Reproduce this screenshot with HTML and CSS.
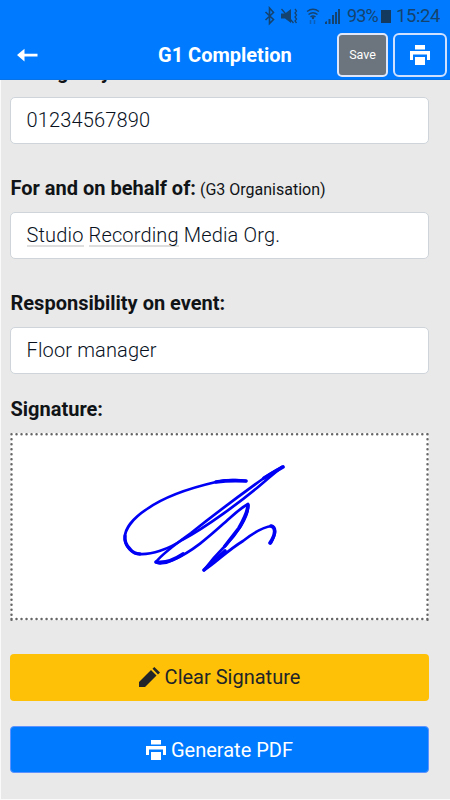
FILE: index.html
```html
<!DOCTYPE html>
<html lang="en">
<head>
<meta charset="utf-8">
<title>G1 Completion</title>
<link rel="stylesheet" href="styles.css">
</head>
<body>
<div class="screen">
<header class="header">
  <div class="status">
    <svg class="status-icons" width="78" height="20" viewBox="0 0 78 20">
      <g fill="none" stroke="#15436f" stroke-width="1.6">
        <path d="M1.500 6l8 7.500-4 4V2l4 4.500-8 7.500"/>
        <path d="M17.500 3l12 14M31 3l1.500 2-1.500 2 1.500 2-1.500 2 1.500 2-1.500 2 1.500 2" stroke-width="1.300"/>
        <path d="M43 5.500q6-4.500 12 0M44.500 8.500q4.500-3.500 9 0M46.500 11q2.500-2 5 0" stroke-width="1.500"/>
        <path d="M46.500 14v4M50.500 14v4" stroke-width="1.500" opacity=".5"/>
      </g>
      <g fill="#15436f"><path d="M17 7.500h4l6-4.500v14l-6-4.500h-4z"/><circle cx="49" cy="12" r="1.200"/><path d="M61 18v-2l2-1v3zM64.500 18v-5h2v5zM68 18V9h2v9zM71 18V6h2v12zM74 18V3h2v15z"/></g>
    </svg>
    <span class="percent">93%</span>
    <span class="battery"></span>
    <span class="clock">15:24</span>
  </div>
  <div class="bar">
    <svg class="back" width="22" height="14" viewBox="0 0 22 14"><path d="M0 7l7.500-6.300v5h13v2.700h-13v5z" fill="#fff"/></svg>
    <h1 class="title">G1 Completion</h1>
    <button class="save">Save</button>
    <button class="print"><svg width="20" height="20" viewBox="0 0 20 20" fill="#fff"><path d="M5 0h10v4.500H5zM0 6h20v9h-3V9.500H3V15H0zM5 12h10v8H5z"/></svg></button>
  </div>
</header>
<main class="form">
  <div class="field">
    <label class="label"><span>Emergency:</span></label>
    <div class="input">01234567890</div>
  </div>
  <div class="field">
    <label class="label"><span>For and on behalf of:</span> <small>(G3 Organisation)</small></label>
    <div class="input"><span class="word">Studio</span> <span class="word">Recording</span> Media Org.</div>
  </div>
  <div class="field">
    <label class="label"><span>Responsibility on event:</span></label>
    <div class="input">Floor manager</div>
  </div>
  <div class="sign">
    <label class="label"><span>Signature:</span></label>
    <svg class="pad" width="419" height="188" viewBox="10 433 419 188">
      <rect x="10.500" y="433" width="418" height="187" fill="#fff"/>
      <path d="M11.500 434.300H429M11.500 619H429M11.500 434.300V620M427.500 434.300V620" fill="none" stroke="#666" stroke-width="2.500" stroke-linecap="round" stroke-dasharray="0.010 5"/>
      <g fill="none" stroke="#0000f5" stroke-linecap="round" stroke-linejoin="round" stroke-width="2.700">
        <path d="M246 481C237 480 224 480 216 482C190 488 164 497 147 509C132 519 124 530 125 539C125 546 132 554 139 554C151 555 169 549 182 540C205 528 242 501 264 482Q271 476 282 467"/>
        <path d="M282 467Q271 473 264 478C239 496 211 517 191 533C177 543 162 554 156 562C157 564 165 564 173 560C196 550 215 531 231 517Q241 508 248 504C250 516 235 536 225 546Q214 557 204 570C215 564 225 552 243 541C253 533 264 527 272 526C277 530 275 535 271 543"/>
        <path d="M216 482Q230 480 246 481M264 478L283 467M248 505Q248 512 239 528L225 546M270 543C276 534 276 527 271 526M204 570L225 551M156 562Q168 564 183 554" stroke-width="3.600"/>
        <path d="M125 536Q124 543 130 549Q134 554 140 554" stroke-width="3.300"/>
      </g>
    </svg>
  </div>
  <button class="action clear"><svg width="21" height="21" viewBox="0 0 21 21" fill="#212529"><path d="M0 15L12 3l5.500 5.500L6 20H0zM13.500 1.800L15.300 0 21 5.500l-2 2z"/></svg><span>Clear Signature</span></button>
  <button class="action pdf"><svg width="20" height="20" viewBox="0 0 20 20" fill="#fff"><path d="M5 0h10v4.500H5zM0 6h20v9h-3V9.500H3V15H0zM5 12h10v8H5z"/></svg><span>Generate PDF</span></button>
</main>
</div>
</body>
</html>
```
FILE: styles.css
```css
* { box-sizing: border-box; }
body { margin: 0; background: #fafafa; font-family: Roboto, sans-serif; color: #111417; }
button { font-family: inherit; padding: 0; margin: 0; }
svg { display: block; flex: none; }
.screen { height: 800px; overflow: hidden; display: flex; flex-direction: column; }
.header { height: 80px; flex: none; background: #007bff; border-bottom: 1px solid #0873e6; }
.status { height: 31px; display: flex; align-items: center; padding-left: 264px; color: #15436f; font-size: 18.500px; letter-spacing: -.400px; white-space: nowrap; }
.status-icons { margin-right: 5px; }
.percent { width: 34px; font-size: 18px; letter-spacing: -.900px; }
.battery { width: 10px; height: 13px; background: #153a60; margin-top: 1px; }
.clock { margin-left: 5px; }
.bar { height: 47px; display: flex; align-items: center; padding-left: 17px; }
.title { margin: 0 0 0 119px; width: 179px; font-size: 20px; line-height: 24px; font-weight: 700; color: #fff; white-space: nowrap; }
.save { width: 51px; height: 44px; border: 2px solid #dfe7fb; border-radius: 5px; background: #6c757d; color: #fff; font-size: 12.500px; flex: none; }
.print { margin-left: 5px; width: 54px; height: 44px; border: 2px solid #cfe0ff; border-radius: 6px; background: #007bff; display: flex; align-items: center; justify-content: center; flex: none; }
.form { height: 719px; flex: none; margin-left: 1px; padding: 0 21px 0 9px; background: #e9e9e9; overflow: hidden; }
.field { height: 115px; }
.field:first-child { margin-top: -20.500px; }
.label { display: block; height: 37px; line-height: 26px; padding-left: .500px; font-size: 20px; white-space: nowrap; }
.field:first-child .label { line-height: 25px; }
.label span { font-weight: 700; }
.label small { font-size: 16px; font-weight: 400; margin-left: -1px; }
.input { height: 47.500px; border: 1px solid #ced4da; border-radius: 5px; background: #fff; padding-left: 15.500px; font-size: 20px; line-height: 45px; font-weight: 300; letter-spacing: .150px; color: #08111d; white-space: nowrap; }
.word { display: inline-block; line-height: 25px; border-bottom: 2px solid #dedede; height: 24px; }
.sign { height: 257.500px; margin-top: -8.500px; }
.action { width: 419px; height: 47px; border: 0; border-radius: 4px; display: flex; align-items: center; justify-content: center; font-size: 20px; }
.clear { background: #ffc107; color: #212529; gap: 5px; }
.pdf { margin-top: 25.500px; background: #007bff; color: #fff; gap: 5px; border: 1px solid #5c93ff; }
```
